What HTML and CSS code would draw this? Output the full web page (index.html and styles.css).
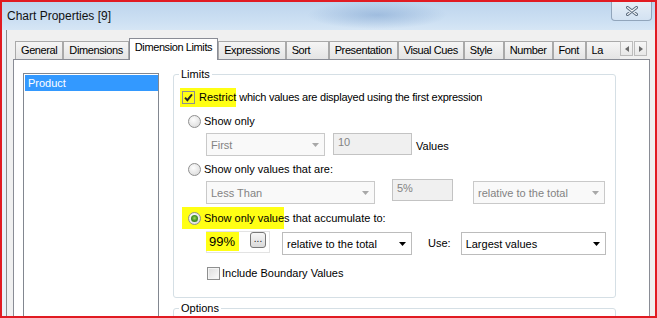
FILE: index.html
```html
<!DOCTYPE html>
<html lang="en">
<head>
  <meta charset="UTF-8" />
  <meta name="viewport" content="width=device-width, initial-scale=1" />
  <title>Chart Properties [9]</title>
  <link rel="stylesheet" href="styles.css">
</head>
<body>
  <div class="window">
    <!-- Title bar -->
    <div class="titlebar">
      <span class="title">Chart Properties [9]</span>
      <div class="close-btn">
        <svg width="12" height="10" viewBox="0 0 12 10">
          <path d="M1.5 1.5 L10.5 8.5 M10.5 1.5 L1.5 8.5" stroke="#5a6b7e" stroke-width="3" stroke-linecap="round" />
          <path d="M1.5 1.5 L10.5 8.5 M10.5 1.5 L1.5 8.5" stroke="#f4f7fa" stroke-width="1.1" stroke-linecap="round" />
        </svg>
      </div>
    </div>

    <div class="frame-body">
      <div class="client">
        <!-- Tab strip -->
        <div class="tabstrip">
          <div class="tabs">
            <div class="tab">General</div>
            <div class="tab">Dimensions</div>
            <div class="tab active">Dimension Limits</div>
            <div class="tab">Expressions</div>
            <div class="tab tab-sort">Sort</div>
            <div class="tab">Presentation</div>
            <div class="tab">Visual Cues</div>
            <div class="tab tab-style">Style</div>
            <div class="tab">Number</div>
            <div class="tab">Font</div>
            <div class="tab tab-cut">La</div>
          </div>
          <div class="tab-scroll">
            <div class="scroll-btn">
              <svg width="4" height="6" viewBox="0 0 4 6"><path d="M4 0 L0 3 L4 6 Z" fill="#6a6a6a" /></svg>
            </div>
            <div class="scroll-btn">
              <svg width="4" height="6" viewBox="0 0 4 6"><path d="M0 0 L4 3 L0 6 Z" fill="#6a6a6a" /></svg>
            </div>
          </div>
        </div>

        <!-- Tab page -->
        <div class="page">
          <div class="listbox">
            <div class="list-item selected">Product</div>
          </div>

          <div class="groups">
            <fieldset class="group">
              <legend>Limits</legend>

              <div class="row row-restrict">
                <span class="hl hl-restrict">
                  <span class="check checked">
                    <svg width="9" height="9" viewBox="0 0 9 9"><path d="M1 4.6 L3.4 7.2 L8 1.4" fill="none" stroke="#262626" stroke-width="1.9" /></svg>
                  </span>
                  <span class="check-label">Restrict</span>
                </span>
                <span class="after">which values are displayed using the first expression</span>
              </div>

              <div class="row row-radio row-show-only">
                <span class="radio"></span>
                <span class="radio-label">Show only</span>
              </div>

              <div class="row row-ctrl row-first">
                <div class="combo disabled w-first">
                  <span>First</span>
                  <svg width="7" height="4" viewBox="0 0 7 4"><path d="M0 0 H7 L3.5 4 Z" fill="#a8a8a8" /></svg>
                </div>
                <div class="edit disabled w-count">10</div>
                <span class="unit">Values</span>
              </div>

              <div class="row row-radio row-values-are">
                <span class="radio"></span>
                <span class="radio-label">Show only values that are:</span>
              </div>

              <div class="row row-ctrl row-less">
                <div class="combo disabled w-less">
                  <span>Less Than</span>
                  <svg width="7" height="4" viewBox="0 0 7 4"><path d="M0 0 H7 L3.5 4 Z" fill="#a8a8a8" /></svg>
                </div>
                <div class="edit disabled w-five">5%</div>
                <div class="combo disabled w-rel1">
                  <span>relative to the total</span>
                  <svg width="7" height="4" viewBox="0 0 7 4"><path d="M0 0 H7 L3.5 4 Z" fill="#a8a8a8" /></svg>
                </div>
              </div>

              <div class="row row-radio row-accum">
                <span class="hl hl-accum">
                  <span class="radio on"></span>
                  <span class="radio-label">Show only value</span>
                </span>
                <span>s that accumulate to:</span>
              </div>

              <div class="row row-ctrl row-pct">
                <div class="edit-pct">
                  <span class="hl hl-pct">99%</span>
                  <span class="dots-btn">...</span>
                </div>
                <div class="combo w-rel2">
                  <span>relative to the total</span>
                  <svg width="7" height="4" viewBox="0 0 7 4"><path d="M0 0 H7 L3.5 4 Z" fill="#000" /></svg>
                </div>
                <span class="use-label">Use:</span>
                <div class="combo w-largest">
                  <span>Largest values</span>
                  <svg width="7" height="4" viewBox="0 0 7 4"><path d="M0 0 H7 L3.5 4 Z" fill="#000" /></svg>
                </div>
              </div>

              <div class="row row-include">
                <span class="check"></span>
                <span class="check-label">Include Boundary Values</span>
              </div>
            </fieldset>

            <fieldset class="group group-options">
              <legend>Options</legend>
            </fieldset>
          </div>
        </div>
      </div>
    </div>
  </div>
</body>
</html>
```

FILE: styles.css
```css
/* Base */
* {
  box-sizing: border-box;
}
body {
  margin: 0;
  width: 657px;
  height: 318px;
  overflow: hidden;
  background: #fff;
  font-family: "Liberation Sans", Arial, sans-serif;
  font-size: 11px;
  color: #000;
}
/* Window frame (red marker outline) */
.window {
  width: 657px;
  height: 318px;
  border: 2px solid #e11b22;
  display: flex;
  flex-direction: column;
  overflow: hidden;
  background: #eaf1f8;
}
/* Title bar */
.titlebar {
  flex: none;
  height: 28px;
  display: flex;
  align-items: flex-start;
  background:
    radial-gradient(ellipse 70px 14px at 375px 13px, rgba(110, 150, 200, 0.45), rgba(110, 150, 200, 0)),
    linear-gradient(#bdd5ed, #cde0f3 70%, #d6e6f5);
}
.title {
  padding: 7px 0 0 5px;
  font-size: 12px;
  line-height: 14px;
  color: #111;
}
.close-btn {
  margin-left: auto;
  margin-right: 3px;
  width: 41px;
  height: 19px;
  border: 1px solid #91a5bb;
  border-top: none;
  border-radius: 0 0 4px 4px;
  background: linear-gradient(#e6eef7, #d3e2f2);
  display: flex;
  align-items: center;
  justify-content: center;
}
.frame-body {
  flex: 1;
  min-height: 0;
  display: flex;
  padding-left: 4px;
}
.client {
  flex: 1;
  min-width: 0;
  display: flex;
  flex-direction: column;
  border-left: 1px solid #8b8b8b;
  background: #f0f0f0;
  padding: 8px 5px 0 6px;
}
/* Tabs */
.tabstrip {
  flex: none;
  height: 22px;
  display: flex;
  align-items: flex-end;
  margin-bottom: -1px;
  padding-left: 2px;
  position: relative;
  z-index: 1;
}
.tabs {
  flex: 1;
  min-width: 0;
  height: 22px;
  display: flex;
  align-items: flex-end;
  overflow: hidden;
}
.tab {
  flex: none;
  height: 18px;
  min-width: 33px;
  margin-bottom: 1px;
  padding: 0 5px;
  border: 1px solid #a9a9a9;
  border-bottom: none;
  background: linear-gradient(#f5f5f5, #e4e4e4);
  line-height: 16px;
  letter-spacing: -0.4px;
  white-space: nowrap;
}
.tab.active {
  height: 22px;
  margin-bottom: 0;
  background: #fff;
  border-color: #898c95;
  line-height: 17px;
}
.tab-sort {
  min-width: 43px;
}
.tab-style {
  min-width: 40px;
}
.tab-cut {
  min-width: 50px;
}
.tab-scroll {
  flex: none;
  display: flex;
  gap: 1px;
  margin: 0 3px 4px 0;
}
.scroll-btn {
  width: 13px;
  height: 15px;
  border: 1px solid #bcbcbc;
  background: linear-gradient(#f7f7f7, #e8e8e8);
  display: flex;
  align-items: center;
  justify-content: center;
}
/* Tab page */
.page {
  flex: 1;
  display: flex;
  align-items: flex-start;
  gap: 14px;
  padding: 8px 0 0 9px;
  background: #fff;
  border: 1px solid #898c95;
  border-bottom: none;
}
.listbox {
  flex: none;
  width: 136px;
  height: 250px;
  margin-top: 5px;
  padding: 1px 0 0 1px;
  border: 1px solid #828790;
}
.list-item {
  height: 16px;
  line-height: 16px;
  padding-left: 3px;
}
.list-item.selected {
  background: #3399ff;
  color: #fff;
}
.groups {
  flex: none;
  width: 443px;
  display: flex;
  flex-direction: column;
  gap: 4px;
}
.group {
  margin: 0;
  min-width: 0;
  padding: 0 0 14px 8px;
  border: 1px solid #d5dfe5;
  border-radius: 3px;
}
.group legend {
  padding: 0 2px;
  margin-left: -3px;
  line-height: 13px;
}
.group-options {
  height: 40px;
  padding-bottom: 0;
}
/* Rows */
.row {
  display: flex;
  align-items: center;
  height: 20px;
  white-space: nowrap;
}
.row-restrict {
  margin-top: 6px;
}
.row-radio {
  padding-left: 6px;
}
.row-show-only {
  margin-top: 4px;
}
.row-values-are {
  margin-top: 4px;
}
.row-accum {
  margin-top: 2px;
}
.row-ctrl {
  align-items: flex-start;
  padding-left: 24px;
}
.row-first {
  margin-top: 2px;
  height: 22px;
}
.row-less {
  margin-top: 1px;
  height: 26px;
}
.row-pct {
  margin-top: 3px;
  height: 24px;
}
.row-include {
  margin-top: 8px;
  padding-left: 25px;
}
/* Yellow marker */
.hl {
  background: #ffff14;
}
.hl-restrict {
  display: inline-flex;
  align-items: center;
  height: 19px;
  margin-left: -2px;
  padding-left: 2px;
}
.hl-accum {
  display: inline-flex;
  align-items: center;
  height: 22px;
  margin-left: -6px;
  padding-left: 6px;
}
.after {
  margin-left: 3px;
  letter-spacing: -0.25px;
}
/* Checkbox and radio */
.check {
  flex: none;
  width: 13px;
  height: 13px;
  border: 1px solid #8e8f8f;
  background: linear-gradient(135deg, #dcdcdc, #fbfbfb);
  box-shadow: inset 0 0 0 1px #f4f4f4;
  display: flex;
  align-items: center;
  justify-content: center;
}
.check.checked {
  background: transparent;
  box-shadow: none;
}
.check-label {
  margin-left: 4px;
}
.row-include .check-label {
  margin-left: 2px;
}
.radio {
  flex: none;
  width: 13px;
  height: 13px;
  border: 1px solid #8f8f8f;
  border-radius: 50%;
  background: radial-gradient(circle at 40% 35%, #fdfdfd, #d6d6d6);
  display: flex;
  align-items: center;
  justify-content: center;
}
.radio.on::before {
  content: "";
  width: 7px;
  height: 7px;
  border-radius: 50%;
  background: radial-gradient(circle at 50% 45%, #a6dc5a 0, #4c9a26 45%, #1f5f10 100%);
}
.radio-label {
  margin-left: 3px;
}
/* Inputs */
.combo {
  flex: none;
  height: 23px;
  display: flex;
  align-items: center;
  justify-content: space-between;
  padding: 0 5px 0 4px;
  border: 1px solid #bcbcbc;
  background: #fff;
}
.combo.disabled {
  background: #f9f9f9;
  border-color: #c9c9c9;
  color: #838383;
}
.edit {
  flex: none;
  height: 22px;
  padding: 2px 4px;
  border: 1px solid #c3c3c3;
}
.edit.disabled {
  background: #f0f0f0;
  color: #838383;
}
.w-first {
  width: 119px;
}
.w-count {
  width: 79px;
  margin-left: 8px;
}
.unit {
  margin-left: 4px;
  line-height: 26px;
}
.w-less {
  width: 169px;
  margin-top: 1px;
}
.w-five {
  width: 61px;
  margin-left: 17px;
  margin-top: -1px;
}
.w-rel1 {
  width: 132px;
  margin-left: 20px;
  margin-top: 1px;
}
.edit-pct {
  flex: none;
  width: 64px;
  height: 22px;
  display: flex;
  align-items: flex-start;
  justify-content: space-between;
  padding-right: 3px;
  border: 1px solid #e3e3e3;
}
.hl-pct {
  height: 19px;
  margin-left: -1px;
  padding: 0 4px 0 3px;
  font-size: 13px;
  line-height: 19px;
}
.dots-btn {
  width: 16px;
  height: 16px;
  border: 1px solid #777;
  border-radius: 3px;
  background: linear-gradient(#f6f6f6, #dadada);
  font-size: 10px;
  line-height: 12px;
  text-align: center;
  color: #222;
}
.w-rel2 {
  width: 130px;
  margin-left: 12px;
  margin-top: 1px;
}
.use-label {
  margin-left: 16px;
  line-height: 24px;
}
.w-largest {
  width: 145px;
  margin-left: 10px;
  margin-top: 1px;
}
```
